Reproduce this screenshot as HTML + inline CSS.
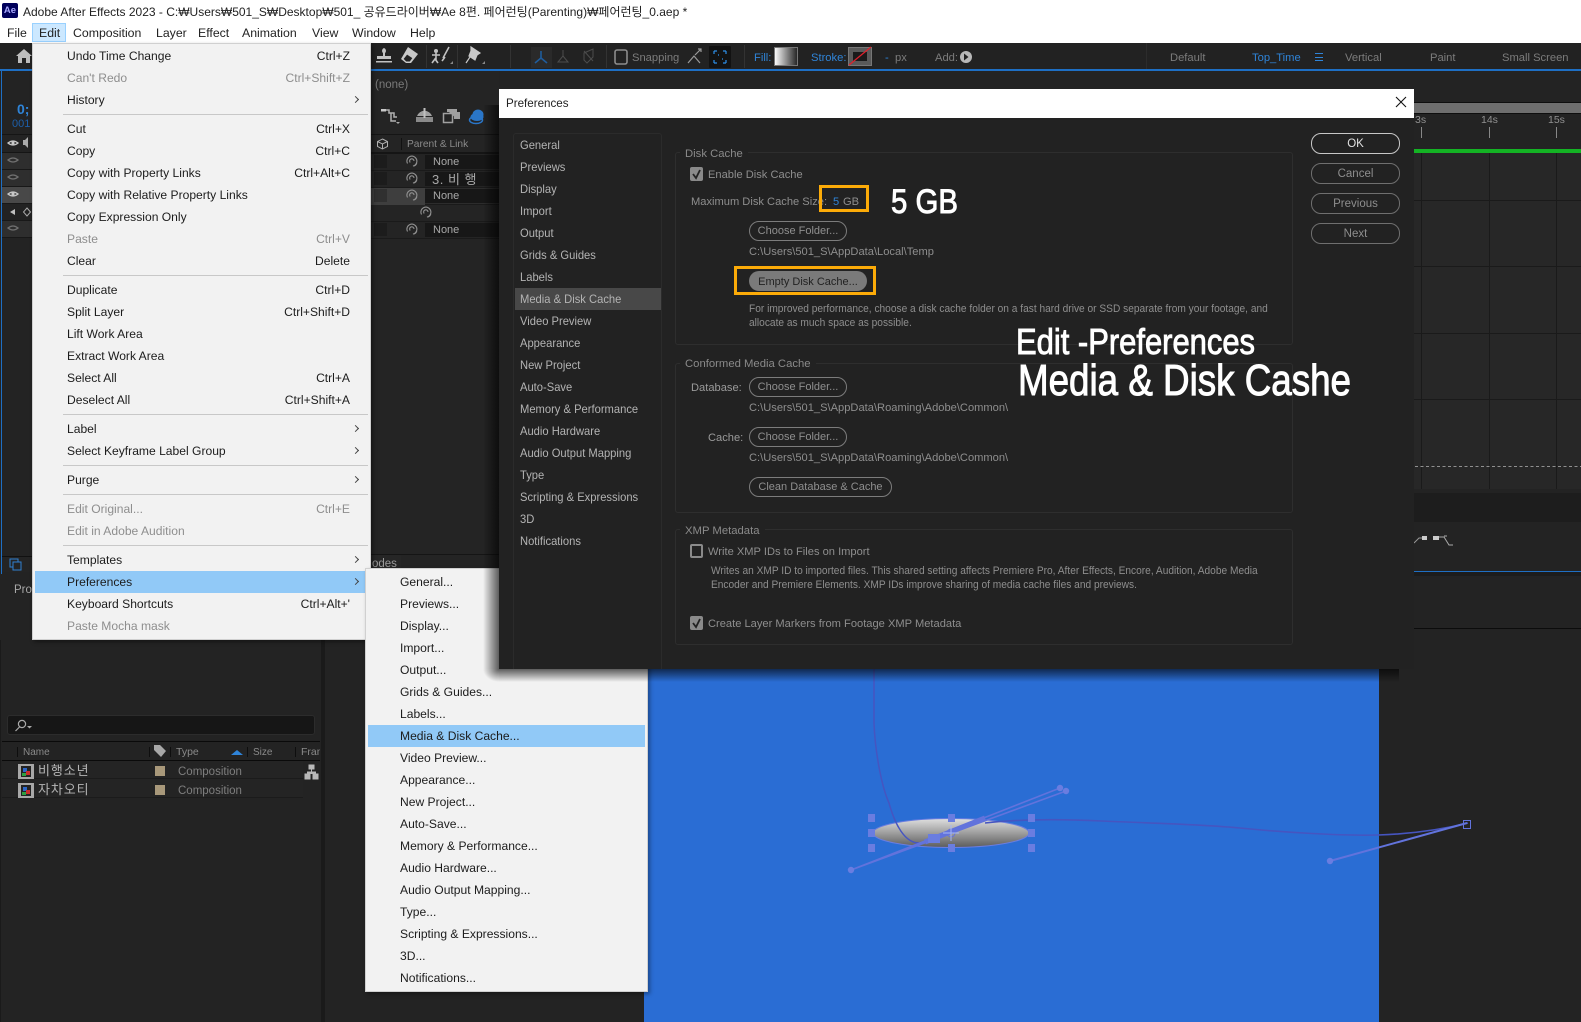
<!DOCTYPE html>
<html><head><meta charset="utf-8"><style>
html,body{margin:0;padding:0;width:1581px;height:1022px;overflow:hidden;background:#232323}
body{position:relative;font-family:"Liberation Sans","Noto Sans CJK KR",sans-serif;font-size:12px;color:#000}
div{position:absolute;white-space:nowrap;box-sizing:border-box}
svg{position:absolute;overflow:visible}
.mb{top:24px;height:19px;line-height:19px;font-size:12.3px;color:#222}
.m{left:67px;height:22px;line-height:22px;font-size:12.1px;color:#1c1c1c}
.s{right:1231px;height:22px;line-height:22px;font-size:12.1px;color:#1c1c1c}
.g{color:#8e8e8e}
.sp{left:63px;width:305px;height:1px;background:#c8c8c8}
.ar{left:353px;width:5px;height:5px;border-top:1px solid #444;border-right:1px solid #444;transform:rotate(45deg)}
.sb{left:400px;height:21px;line-height:23px;font-size:12.1px;color:#1c1c1c}
.tb{top:50px;height:16px;line-height:16px;font-size:11.2px;color:#7c7c7c}
.l{left:520px;height:16px;line-height:18px;font-size:11.6px;color:#b4b4b4;transform:scaleX(.965);transform-origin:left}
.d{height:16px;line-height:18px;font-size:11.3px;color:#8e8e8e;transform:scaleX(.985);transform-origin:left}
.ds{transform:scaleX(.9)}
.gb{border:1px solid #2e2e2e;border-radius:3px}
.gl{background:#222;padding:0 5px;height:16px;line-height:18px;font-size:11.3px;color:#8a8a8a}
.b{border:1.5px solid #7c7c7c;border-radius:10px;height:20px;line-height:19px;text-align:center;font-size:11px;color:#8f8f8f}
.rb{left:1311px;width:89px;height:21px;border:1.5px solid #6f6f6f;border-radius:10px;line-height:20px;text-align:center;font-size:11.5px;color:#8e8e8e}
.rw{left:371px;width:128px;height:17px;background:#242424;border-bottom:1px solid #1a1a1a}
.nn{left:425px;width:74px;height:14px;background:#171717;line-height:15px;padding-left:8px;font-size:11px;color:#a8a8a8}
.ck{left:690px;width:13px;height:14px;border-radius:2px;background:#8a8a8a}
.ce{left:2px;width:30px;height:16px;background:#2e2e2e;border-bottom:1px solid #181818}
</style></head><body>

<!-- title + menubar -->
<div style="left:0;top:0;width:1581px;height:43px;background:#fff"></div>
<div style="left:2px;top:3px;width:16px;height:15px;background:#00005b;border-radius:2px;color:#a9a9ff;font-size:9.5px;font-weight:bold;line-height:15px;text-align:center">Ae</div>
<div style="left:23px;top:4px;height:16px;line-height:16px;font-size:12px;color:#222">Adobe After Effects 2023 - C:₩Users₩501_S₩Desktop₩501_ 공유드라이버₩Ae 8편. 페어런팅(Parenting)₩페어런팅_0.aep *</div>
<div style="left:32px;top:23px;width:34px;height:19px;background:#cce8ff;border:1px solid #99d1ff"></div>
<div class="mb" style="left:7px">File</div>
<div class="mb" style="left:39px">Edit</div>
<div class="mb" style="left:73px">Composition</div>
<div class="mb" style="left:156px">Layer</div>
<div class="mb" style="left:198px">Effect</div>
<div class="mb" style="left:242px">Animation</div>
<div class="mb" style="left:312px">View</div>
<div class="mb" style="left:352px">Window</div>
<div class="mb" style="left:410px">Help</div>

<!-- toolbar -->
<div style="left:0;top:43px;width:1581px;height:27px;background:#222"></div>
<div style="left:0;top:69px;width:1581px;height:2px;background:#1e6fc4"></div>
<svg style="left:0;top:43px" width="1581" height="27">
<path d="M16 13l8-7 8 7h-2v7h-4v-5h-4v5h-4v-7z" fill="#bdbdbd"/>
<path d="M384 5a3 3 0 0 1 1 5v3h6v3h-14v-3h6v-3a3 3 0 0 1 1-5zM376 18h16v1.5h-16z" fill="#c2c2c2"/>
<path d="M408 4l10 7-7 9h-5l-5-4z" fill="#c8c8c8"/>
<path d="M403 16l4-5 6 4-3 4h-4z" fill="#222" stroke="#c8c8c8"/>
<circle cx="436" cy="8" r="2" fill="#c2c2c2"/><path d="M436 10v7M432 20l3-4 3 4M432 12h8M443 15l6-11M442 18l3-4" stroke="#c2c2c2" stroke-width="1.6" fill="none"/>
<path d="M471 4l9 6-3 2-2 5-6-4 2-5zM470 14l-4 6" stroke="#c8c8c8" stroke-width="1.2" fill="#c8c8c8"/>
<path d="M450 21h3v-3zM482 21h3v-3z" fill="#888"/>
<rect x="510" y="2" width="1" height="23" fill="#333"/><rect x="606" y="2" width="1" height="23" fill="#333"/><rect x="744" y="2" width="1" height="23" fill="#333"/><rect x="426" y="2" width="1" height="23" fill="#333"/><rect x="457" y="2" width="1" height="23" fill="#333"/><rect x="1146" y="0" width="1" height="26" fill="#2c2c2c"/>
<rect x="531" y="4" width="21" height="21" fill="#2a2a2a"/>
<path d="M541 8v7l-6 5M541 15l6 5" stroke="#1f5c9c" stroke-width="1.6" fill="none"/>
<path d="M563 7v6l-5 6h10l-5-6" stroke="#4c4c4c" fill="none"/>
<path d="M584 8l9 10M593 6v8l-6 6-3-3v-7z" stroke="#4c4c4c" fill="none"/>
<rect x="615" y="7" width="12" height="14" rx="2" fill="none" stroke="#8c8c8c" stroke-width="1.6"/>
<path d="M688 20l6-7 6 7M695 12l6-6M698 6h3v3" stroke="#9a9a9a" stroke-width="1.2" fill="none"/>
<rect x="709" y="3" width="22" height="22" rx="1" fill="#121212"/>
<path d="M714 8v3M714 8h3M726 8h-3M726 8v3M714 20v-3M714 20h3M726 20h-3M726 20v-3M718 12h1M722 16h1" stroke="#2e8fe8" stroke-width="1.2"/>
<defs><linearGradient id="fg"><stop offset="0" stop-color="#fff"/><stop offset="1" stop-color="#222"/></linearGradient></defs>
<rect x="774.5" y="4.5" width="23" height="18" fill="url(#fg)" stroke="#777"/>
<rect x="848.5" y="4.5" width="23" height="18" fill="#5a5a5a" stroke="#777"/><rect x="853" y="9" width="14" height="9" fill="#1a1a1a"/><path d="M849 22l22-18" stroke="#e0202c" stroke-width="1.2"/>
<circle cx="966" cy="14" r="6" fill="#b8b8b8"/><path d="M964 10.500l4.500 3.500-4.500 3.500z" fill="#222"/>
</svg>
<div class="tb" style="left:632px">Snapping</div>
<div class="tb" style="left:754px;color:#2f84d8">Fill:</div>
<div class="tb" style="left:811px;color:#2f84d8">Stroke:</div>
<div class="tb" style="left:885px;color:#2f84d8">-</div>
<div class="tb" style="left:895px">px</div>
<div class="tb" style="left:935px">Add:</div>
<div class="tb" style="left:1170px">Default</div>
<div class="tb" style="left:1252px;color:#2f84d8">Top_Time</div>
<div style="left:1315px;top:53px;width:8px;height:8px;border-top:1px solid #2f84d8;border-bottom:1px solid #2f84d8"></div><div style="left:1315px;top:56.5px;width:8px;height:1px;background:#2f84d8"></div>
<div class="tb" style="left:1345px">Vertical</div>
<div class="tb" style="left:1430px">Paint</div>
<div class="tb" style="left:1502px">Small Screen</div>

<!-- left panel behind menu -->
<div style="left:1px;top:71px;width:1px;height:503px;background:#1e6fc4"></div>
<div style="left:17px;top:101px;color:#2f84d8;font-weight:bold;font-size:14px;line-height:16px">0;</div>
<div style="left:12px;top:116px;color:#1d5ea8;font-size:11px;line-height:16px">001</div>
<div style="left:2px;top:134px;width:30px;height:1px;background:#151515"></div>
<div style="left:2px;top:152px;width:30px;height:1px;background:#151515"></div>
<div class="ce" style="top:153px;height:17px"></div><div class="ce" style="top:170px;height:17px"></div><div class="ce" style="top:187px;height:17px;background:#484848"></div><div class="ce" style="top:204px;height:17px;background:#222"></div><div class="ce" style="top:221px;height:17px"></div>
<svg style="left:0;top:0" width="34" height="240">
<g fill="none" stroke="#c8c8c8" stroke-width="1.3"><path d="M8 143q5-4 10 0q-5 4-10 0z"/><path d="M8 160q5-4 10 0q-5 4-10 0zM8 177q5-4 10 0q-5 4-10 0zM8 228q5-4 10 0q-5 4-10 0z" stroke="#707070"/><path d="M8 194q5-4 10 0q-5 4-10 0z"/></g>
<circle cx="13" cy="143" r="1.6" fill="#c8c8c8"/><circle cx="13" cy="194" r="1.6" fill="#c8c8c8"/>
<path d="M23 140h2l3-3v11l-3-3h-2z" fill="#aaa"/><path d="M15 209l-5 3 5 3z" fill="#c0c0c0"/><path d="M27 208l3.500 4-3.500 4-3.500-4z" fill="none" stroke="#aaa"/>
</svg>
<div style="left:2px;top:556px;width:30px;height:16px;background:#242424;border-top:1px solid #111"></div>
<svg style="left:9px;top:558px" width="14" height="14"><rect x="1" y="1" width="8" height="8" fill="none" stroke="#2f7fd0"/><rect x="4" y="4" width="8" height="8" fill="#232323" stroke="#2f7fd0"/></svg>
<div style="left:14px;top:582px;line-height:16px;font-size:11.5px;color:#a8a8a8">Pro</div>

<!-- behind-menu middle panel -->
<div style="left:371px;top:71px;width:128px;height:500px;background:#242424"></div>
<div style="left:375px;top:77px;height:16px;line-height:16px;font-size:11.5px;color:#7a7a7a">(none)</div>
<svg style="left:371px;top:100px" width="128" height="30">
<path d="M11 10h7v3h5v4h3M18 13h2v8h5" stroke="#b0b0b0" stroke-width="1.5" fill="none"/><rect x="10" y="9" width="5" height="2.500" fill="#c8c8c8"/><path d="M25 22h4l-2 2z" fill="#aaa"/>
<path d="M46 16a8 8 0 0 1 15 0z" fill="#a0a0a0"/><rect x="45" y="17" width="17" height="5" fill="#8a8a8a"/><rect x="52.500" y="8" width="2" height="10" fill="#c0c0c0"/>
<rect x="72.500" y="13.500" width="9" height="9" fill="none" stroke="#a0a0a0" stroke-width="1.500"/><path d="M76 9h10v10h-3v-7h-7zM78 12h11v7h-3" fill="#a0a0a0"/>
<ellipse cx="105" cy="20" rx="6.500" ry="3.500" fill="none" stroke="#2a76c8" stroke-width="1.500"/><ellipse cx="106" cy="17" rx="6.500" ry="4" fill="#2a76c8"/><ellipse cx="107" cy="14.500" rx="5.500" ry="5" fill="#2a76c8"/>
</svg>
<div style="left:371px;top:134px;width:128px;height:1px;background:#151515"></div>
<div style="left:371px;top:152px;width:128px;height:2px;background:#151515"></div>
<svg style="left:376px;top:137px" width="14" height="14"><path d="M6.500 2l5 2.500v5l-5 2.500-5-2.500v-5zM1.500 4.500l5 2.500 5-2.500M6.500 7v5" fill="none" stroke="#b0b0b0"/></svg>
<div style="left:401px;top:138px;width:1px;height:12px;background:#111"></div>
<div style="left:407px;top:137px;height:15px;line-height:15px;font-size:10.2px;color:#8a8a8a">Parent &amp; Link</div>
<div class="rw" style="top:154px"></div><div class="rw" style="top:171px"></div><div class="rw" style="top:188px;background:#2c2c2c"></div><div class="rw" style="top:205px"></div><div class="rw" style="top:222px"></div>
<div style="left:371px;top:188px;width:54px;height:17px;background:#3e3e3e"></div>
<div style="left:374px;top:155px;width:13px;height:13px;background:#1c1c1c"></div>
<div style="left:374px;top:172px;width:13px;height:13px;background:#1c1c1c"></div>
<div style="left:374px;top:189px;width:13px;height:13px;background:#303030"></div>
<div style="left:374px;top:223px;width:13px;height:13px;background:#1c1c1c"></div>
<div class="nn" style="top:155px">None</div><div class="nn" style="top:172px;font-size:13px;padding-left:7px;letter-spacing:.5px">3. 비 행</div><div class="nn" style="top:189px">None</div><div class="nn" style="top:223px">None</div>
<svg style="left:0;top:0" width="500" height="240" fill="none" stroke="#909090" stroke-width="1.100">
<defs><path id="spi" d="M-4.500 2.500A5 5 0 1 1 1 5Q4 5 4.800 2M-1.800 1.500A2.200 2.200 0 1 1 2 0"/></defs>
<use href="#spi" x="412" y="161"/><use href="#spi" x="412" y="178"/><use href="#spi" x="412" y="195"/><use href="#spi" x="426" y="212"/><use href="#spi" x="412" y="229"/>
</svg>
<div style="left:371px;top:554px;width:30px;height:17px;background:#262626;border-top-right-radius:3px"></div>
<div style="left:372px;top:556px;height:16px;line-height:16px;font-size:11.5px;color:#9a9a9a">odes</div>
<div style="left:371px;top:554px;width:128px;height:1px;background:#151515"></div>

<!-- right timeline -->
<div style="left:1414px;top:71px;width:167px;height:951px;background:#232323"></div>
<div style="left:1414px;top:102px;width:167px;height:12px;background:#6e6e6e;border-top:1px solid #0e0e0e;border-bottom:1px solid #0e0e0e"></div>
<div style="left:1415px;top:112px;height:16px;line-height:16px;font-size:10.5px;color:#909090">3s</div>
<div style="left:1481px;top:112px;height:16px;line-height:16px;font-size:10.5px;color:#909090">14s</div>
<div style="left:1548px;top:112px;height:16px;line-height:16px;font-size:10.5px;color:#909090">15s</div>
<div style="left:1414px;top:149px;width:167px;height:4px;background:#14b324"></div>
<div style="left:1414px;top:153px;width:167px;height:336px;background:#272727"></div>
<svg style="left:1414px;top:100px" width="167" height="400">
<path d="M7.500 27v11M75.500 27v11M142.500 27v11" stroke="#888"/>
<path d="M7.500 53v336M75.500 53v336M142.500 53v336M0 100.500h167M0 166.500h167M0 233.500h167M0 299.500h167" stroke="#1a1a1a"/>
<path d="M1 366.500h166" stroke="#909090" stroke-dasharray="3 2.500"/>
</svg>
<div style="left:1414px;top:493px;width:167px;height:29px;background:#1d1d1d"></div>
<svg style="left:1414px;top:532px" width="60" height="20"><path d="M0 11l5-5h3" stroke="#999" fill="none"/><rect x="8" y="4" width="5" height="4" fill="#ccc"/><rect x="19" y="4" width="6" height="4" fill="#ccc"/><path d="M25 5h5l5 8h4M30 4h3" stroke="#aaa" fill="none"/></svg>
<div style="left:1414px;top:571px;width:167px;height:1px;background:#1e6fc4"></div>
<div style="left:1414px;top:572px;width:167px;height:4px;background:#1c1c1c"></div>
<div style="left:1414px;top:628px;width:167px;height:1px;background:#0c0c0c"></div>

<!-- project panel -->
<div style="left:321px;top:640px;width:4px;height:382px;background:#1a1a1a"></div>
<div style="left:0;top:640px;width:1px;height:382px;background:#1a1a1a"></div>
<div style="left:7px;top:715px;width:308px;height:20px;background:#161616;border:1px solid #2c2c2c;border-radius:3px"></div>
<svg style="left:14px;top:718px" width="20" height="15"><circle cx="8" cy="6" r="3.600" fill="none" stroke="#aaa" stroke-width="1.2"/><path d="M5.500 9l-4 4" stroke="#aaa" stroke-width="1.2"/><path d="M13 8h5l-2.500 2.500z" fill="#aaa"/></svg>
<div style="left:2px;top:741px;width:318px;height:1px;background:#0a0a0a"></div>
<div style="left:2px;top:760px;width:318px;height:1px;background:#0a0a0a"></div>
<div style="left:2px;top:761px;width:301px;height:18px;background:#242424;border-bottom:1px solid #1b1b1b"></div>
<div style="left:2px;top:779px;width:301px;height:19px;background:#242424;border-bottom:1px solid #1b1b1b"></div>
<svg style="left:0;top:742px" width="325" height="60">
<path d="M17.500 5v10M149.500 5v10M170.500 5v10M247.500 5v10M295.500 5v10" stroke="#0e0e0e"/>
<path d="M154 3h6l6 6-5 6-7-7z" fill="#a8a8a8"/><path d="M231 13l6-5 6 5z" fill="#2f84d8"/>
<g><rect x="18" y="22" width="16" height="15" fill="#a8a8a8"/><rect x="21" y="24" width="10" height="11" fill="#222"/><rect x="23" y="26" width="4" height="4" fill="#2c66c8"/><rect x="26" y="29" width="4" height="4" fill="#c82c2c"/><rect x="22" y="31" width="4" height="3" fill="#2ca040"/></g>
<g transform="translate(0,19)"><rect x="18" y="22" width="16" height="15" fill="#a8a8a8"/><rect x="21" y="24" width="10" height="11" fill="#222"/><rect x="23" y="26" width="4" height="4" fill="#2c66c8"/><rect x="26" y="29" width="4" height="4" fill="#c82c2c"/><rect x="22" y="31" width="4" height="3" fill="#2ca040"/></g>
<rect x="155" y="24" width="10" height="10" fill="#a8987a"/><rect x="155" y="43" width="10" height="10" fill="#a8987a"/>
<path d="M309 23h5v4h-5zM305 32h5v5h-5zM313 32h5v5h-5zM311.500 27v3M307.500 32v-2h8v2" fill="#b8b8b8" stroke="#b8b8b8"/>
</svg>
<div style="left:23px;top:745px;height:16px;line-height:16px;font-size:10px;color:#8a8a8a">Name</div>
<div style="left:176px;top:744px;height:16px;line-height:16px;font-size:10.5px;color:#8a8a8a">Type</div>
<div style="left:253px;top:745px;height:16px;line-height:16px;font-size:10px;color:#8a8a8a">Size</div>
<div style="left:301px;top:744px;width:19px;overflow:hidden;height:16px;line-height:16px;font-size:10.500px;color:#8a8a8a">Fram</div>
<div style="left:38px;top:762px;height:18px;line-height:18px;font-size:13px;letter-spacing:.9px;color:#b4b4b4">비행소년</div>
<div style="left:38px;top:781px;height:18px;line-height:18px;font-size:13px;letter-spacing:.9px;color:#b4b4b4">자차오티</div>
<div style="left:178px;top:764px;height:16px;line-height:16px;font-size:11.500px;color:#7e7e7e">Composition</div>
<div style="left:178px;top:783px;height:16px;line-height:16px;font-size:11.500px;color:#7e7e7e">Composition</div>

<!-- blue comp -->
<div style="left:644px;top:669px;width:735px;height:353px;background:#2a6dd4"></div>
<svg style="left:0;top:0;width:1581px;height:1022px;position:absolute" viewBox="0 0 1581 1022">
<defs><linearGradient id="el" x1="0" y1="0" x2="0" y2="1"><stop offset="0" stop-color="#e0e0e0"/><stop offset="1" stop-color="#5c5c5c"/></linearGradient></defs>
<ellipse cx="951" cy="833" rx="78" ry="14.500" fill="url(#el)" stroke="#6a7de0"/>
<g stroke="#6273dc" fill="none">
<path d="M874 669L874 723C875 750 881 785 889 803C895 825 905 843 919 843" stroke-width="1.500" stroke="#4655c0"/>
<path d="M985 823C1020 819 1060 819 1102 821S1200 824 1240 828S1340 836 1378 835C1410 834 1440 830 1468 823" stroke-width="1.600" stroke="#4655c0"/>
<path d="M851 870L1060 788M851 870L1066 791" stroke-width="1.600"/>
<path d="M925 842L985 818" stroke-width="5"/>
<path d="M1330 861L1467 823" stroke-width="2"/>
<rect x="1463.500" y="820.500" width="7" height="8" stroke-width="1"/>
<circle cx="951" cy="833" r="4"/><path d="M951 825v16M943 833h16" stroke="#a8b8f4"/>
</g>
<g fill="#6a7de0">
<circle cx="851" cy="870" r="3.200"/><circle cx="1060" cy="788" r="3.200"/><circle cx="1066" cy="791" r="3.200"/><circle cx="1330" cy="861" r="3.200"/>
<rect x="868" y="814" width="7" height="8"/><rect x="948" y="814" width="7" height="8"/><rect x="1028" y="814" width="7" height="8"/>
<rect x="868" y="829" width="7" height="8"/><rect x="1028" y="829" width="7" height="8"/>
<rect x="868" y="844" width="7" height="8"/><rect x="948" y="844" width="7" height="8"/><rect x="1028" y="844" width="7" height="8"/>
<rect x="928" y="834" width="12" height="9"/>
</g>
</svg>

<!-- edit menu -->
<div style="left:32px;top:43px;width:339px;height:597px;background:#f2f2f2;border:1px solid #d0d0d0;box-shadow:2px 2px 4px rgba(0,0,0,.4)"></div>
<div style="left:35px;top:571px;width:331px;height:22px;background:#91c9f7"></div>
<div class="m" style="top:45px">Undo Time Change</div><div class="s" style="top:45px">Ctrl+Z</div>
<div class="m g" style="top:67px">Can't Redo</div><div class="s g" style="top:67px">Ctrl+Shift+Z</div>
<div class="m" style="top:89px">History</div><div class="ar" style="top:97px"></div>
<div class="sp" style="top:114px"></div>
<div class="m" style="top:118px">Cut</div><div class="s" style="top:118px">Ctrl+X</div>
<div class="m" style="top:140px">Copy</div><div class="s" style="top:140px">Ctrl+C</div>
<div class="m" style="top:162px">Copy with Property Links</div><div class="s" style="top:162px">Ctrl+Alt+C</div>
<div class="m" style="top:184px">Copy with Relative Property Links</div>
<div class="m" style="top:206px">Copy Expression Only</div>
<div class="m g" style="top:228px">Paste</div><div class="s g" style="top:228px">Ctrl+V</div>
<div class="m" style="top:250px">Clear</div><div class="s" style="top:250px">Delete</div>
<div class="sp" style="top:275px"></div>
<div class="m" style="top:279px">Duplicate</div><div class="s" style="top:279px">Ctrl+D</div>
<div class="m" style="top:301px">Split Layer</div><div class="s" style="top:301px">Ctrl+Shift+D</div>
<div class="m" style="top:323px">Lift Work Area</div>
<div class="m" style="top:345px">Extract Work Area</div>
<div class="m" style="top:367px">Select All</div><div class="s" style="top:367px">Ctrl+A</div>
<div class="m" style="top:389px">Deselect All</div><div class="s" style="top:389px">Ctrl+Shift+A</div>
<div class="sp" style="top:414px"></div>
<div class="m" style="top:418px">Label</div><div class="ar" style="top:426px"></div>
<div class="m" style="top:440px">Select Keyframe Label Group</div><div class="ar" style="top:448px"></div>
<div class="sp" style="top:465px"></div>
<div class="m" style="top:469px">Purge</div><div class="ar" style="top:477px"></div>
<div class="sp" style="top:494px"></div>
<div class="m g" style="top:498px">Edit Original...</div><div class="s g" style="top:498px">Ctrl+E</div>
<div class="m g" style="top:520px">Edit in Adobe Audition</div>
<div class="sp" style="top:545px"></div>
<div class="m" style="top:549px">Templates</div><div class="ar" style="top:557px"></div>
<div class="m" style="top:571px">Preferences</div><div class="ar" style="top:579px"></div>
<div class="m" style="top:593px">Keyboard Shortcuts</div><div class="s" style="top:593px">Ctrl+Alt+'</div>
<div class="m g" style="top:615px">Paste Mocha mask</div>

<!-- submenu -->
<div style="left:365px;top:568px;width:283px;height:424px;background:#f2f2f2;border:1px solid #d0d0d0;box-shadow:2px 2px 4px rgba(0,0,0,.35)"></div>
<div style="left:368px;top:725px;width:277px;height:22px;background:#91c9f7"></div>
<div class="sb" style="top:571px">General...</div>
<div class="sb" style="top:593px">Previews...</div>
<div class="sb" style="top:615px">Display...</div>
<div class="sb" style="top:637px">Import...</div>
<div class="sb" style="top:659px">Output...</div>
<div class="sb" style="top:681px">Grids &amp; Guides...</div>
<div class="sb" style="top:703px">Labels...</div>
<div class="sb" style="top:725px">Media &amp; Disk Cache...</div>
<div class="sb" style="top:747px">Video Preview...</div>
<div class="sb" style="top:769px">Appearance...</div>
<div class="sb" style="top:791px">New Project...</div>
<div class="sb" style="top:813px">Auto-Save...</div>
<div class="sb" style="top:835px">Memory &amp; Performance...</div>
<div class="sb" style="top:857px">Audio Hardware...</div>
<div class="sb" style="top:879px">Audio Output Mapping...</div>
<div class="sb" style="top:901px">Type...</div>
<div class="sb" style="top:923px">Scripting &amp; Expressions...</div>
<div class="sb" style="top:945px">3D...</div>
<div class="sb" style="top:967px">Notifications...</div>

<!-- dialog shadow -->
<div style="left:483px;top:105px;width:16px;height:564px;background:linear-gradient(to left,rgba(0,0,0,.62),rgba(0,0,0,.35) 45%,rgba(0,0,0,0))"></div>
<div style="left:499px;top:669px;width:900px;height:13px;background:linear-gradient(to bottom,rgba(0,0,0,.62),rgba(0,0,0,.35) 45%,rgba(0,0,0,0))"></div>
<div style="left:483px;top:669px;width:16px;height:13px;background:radial-gradient(farthest-side at top right,rgba(0,0,0,.62),rgba(0,0,0,.3) 50%,rgba(0,0,0,0))"></div>
<!-- dialog -->
<div style="left:499px;top:89px;width:915px;height:580px;background:#222"></div>
<div style="left:499px;top:89px;width:915px;height:29px;background:#fff"></div>
<div style="left:506px;top:96px;height:16px;line-height:16px;font-size:11.6px;color:#222">Preferences</div>
<svg style="left:1395px;top:96px" width="12" height="12"><path d="M1 1l10 10M11 1L1 11" stroke="#111" stroke-width="1.100"/></svg>

<div style="left:513px;top:133px;width:149px;height:536px;border:1px solid #2b2b2b;border-bottom:0;border-radius:3px 3px 0 0"></div>
<div style="left:515px;top:288px;width:146px;height:22px;background:#484848"></div>
<div class="l" style="top:137px">General</div>
<div class="l" style="top:159px">Previews</div>
<div class="l" style="top:181px">Display</div>
<div class="l" style="top:203px">Import</div>
<div class="l" style="top:225px">Output</div>
<div class="l" style="top:247px">Grids &amp; Guides</div>
<div class="l" style="top:269px">Labels</div>
<div class="l" style="top:291px">Media &amp; Disk Cache</div>
<div class="l" style="top:313px">Video Preview</div>
<div class="l" style="top:335px">Appearance</div>
<div class="l" style="top:357px">New Project</div>
<div class="l" style="top:379px">Auto-Save</div>
<div class="l" style="top:401px">Memory &amp; Performance</div>
<div class="l" style="top:423px">Audio Hardware</div>
<div class="l" style="top:445px">Audio Output Mapping</div>
<div class="l" style="top:467px">Type</div>
<div class="l" style="top:489px">Scripting &amp; Expressions</div>
<div class="l" style="top:511px">3D</div>
<div class="l" style="top:533px">Notifications</div>

<!-- Disk cache -->
<div class="gb" style="left:675px;top:152px;width:618px;height:193px"></div>
<div class="gl" style="left:680px;top:145px">Disk Cache</div>
<div class="ck" style="top:167px"></div>
<svg style="left:690px;top:167px" width="13" height="14"><path d="M3 7l3 4 4-8" stroke="#222" stroke-width="1.800" fill="none"/></svg>
<div class="d" style="left:708px;top:166px">Enable Disk Cache</div>
<div class="d" style="left:691px;top:193px">Maximum Disk Cache Size:</div>
<div style="left:819px;top:185px;width:50px;height:27px;border:3px solid #fcab08"></div>
<div class="d" style="left:833px;top:193px;color:#2f84d8">5</div>
<div class="d" style="left:843px;top:193px">GB</div>
<div class="b" style="left:749px;top:221px;width:98px">Choose Folder...</div>
<div class="d" style="left:749px;top:243px">C:\Users\501_S\AppData\Local\Temp</div>
<div style="left:734px;top:266px;width:142px;height:29px;border:3px solid #fcab08"></div>
<div style="left:749px;top:271px;width:118px;height:20px;border-radius:10px;background:#7a7a7a;line-height:22px;text-align:center;font-size:11px;color:#222">Empty Disk Cache...</div>
<div class="d ds" style="left:749px;top:300px">For improved performance, choose a disk cache folder on a fast hard drive or SSD separate from your footage, and</div>
<div class="d ds" style="left:749px;top:314px">allocate as much space as possible.</div>

<!-- conformed -->
<div class="gb" style="left:675px;top:363px;width:618px;height:150px"></div>
<div class="gl" style="left:680px;top:355px">Conformed Media Cache</div>
<div class="d" style="left:691px;top:379px;color:#9a9a9a">Database:</div>
<div class="b" style="left:749px;top:377px;width:98px">Choose Folder...</div>
<div class="d" style="left:749px;top:399px">C:\Users\501_S\AppData\Roaming\Adobe\Common\</div>
<div class="d" style="left:708px;top:429px;color:#9a9a9a">Cache:</div>
<div class="b" style="left:749px;top:427px;width:98px">Choose Folder...</div>
<div class="d" style="left:749px;top:449px">C:\Users\501_S\AppData\Roaming\Adobe\Common\</div>
<div class="b" style="left:749px;top:477px;width:143px">Clean Database &amp; Cache</div>

<!-- xmp -->
<div class="gb" style="left:675px;top:529px;width:618px;height:116px"></div>
<div class="gl" style="left:680px;top:522px">XMP Metadata</div>
<div style="left:690px;top:544px;width:13px;height:14px;border:2px solid #8a8a8a;border-radius:2px"></div>
<div class="d" style="left:708px;top:543px">Write XMP IDs to Files on Import</div>
<div class="d ds" style="left:711px;top:562px">Writes an XMP ID to imported files. This shared setting affects Premiere Pro, After Effects, Encore, Audition, Adobe Media</div>
<div class="d ds" style="left:711px;top:576px">Encoder and Premiere Elements. XMP IDs improve sharing of media cache files and previews.</div>
<div class="ck" style="top:616px"></div>
<svg style="left:690px;top:616px" width="13" height="14"><path d="M3 7l3 4 4-8" stroke="#222" stroke-width="1.800" fill="none"/></svg>
<div class="d" style="left:708px;top:615px">Create Layer Markers from Footage XMP Metadata</div>

<!-- right buttons -->
<div class="rb" style="top:133px;border-color:#c8c8c8;color:#e0e0e0">OK</div>
<div class="rb" style="top:163px">Cancel</div>
<div class="rb" style="top:193px">Previous</div>
<div class="rb" style="top:223px">Next</div>

<!-- annotations -->
<svg style="left:0;top:0;width:1581px;height:1022px;position:absolute" viewBox="0 0 1581 1022" font-family="Liberation Sans" fill="#fff">
<text x="891" y="213" font-size="34" textLength="67" lengthAdjust="spacingAndGlyphs" stroke="#fff" stroke-width=".9">5 GB</text>
<text x="1016" y="354" font-size="36" textLength="239" lengthAdjust="spacingAndGlyphs" stroke="#fff" stroke-width=".9">Edit -Preferences</text>
<text x="1018" y="395" font-size="44" textLength="333" lengthAdjust="spacingAndGlyphs" stroke="#fff" stroke-width="1">Media &amp; Disk Cashe</text>
</svg>
</body></html>
